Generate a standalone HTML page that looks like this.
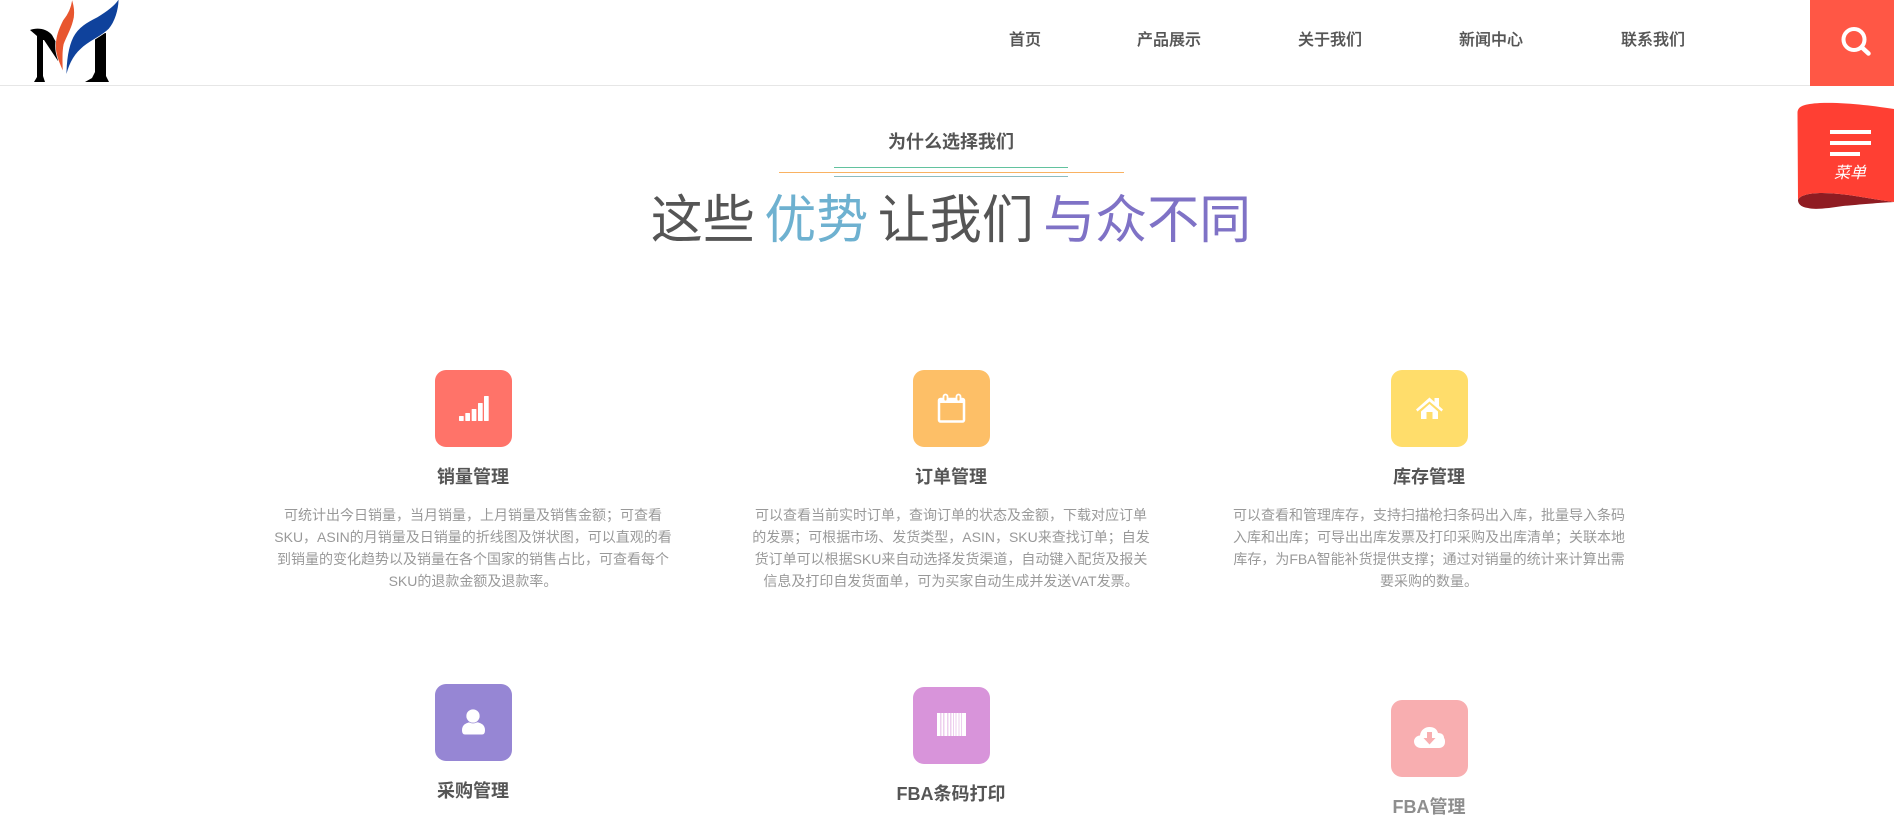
<!DOCTYPE html>
<html lang="zh">
<head>
<meta charset="utf-8">
<title>为什么选择我们</title>
<style>
html,body{margin:0;padding:0;background:#fff}
body{width:1894px;height:822px;overflow:hidden;position:relative;font-family:"Liberation Sans","Noto Sans CJK SC",sans-serif;color:#555}
.a{position:absolute;white-space:nowrap}
.hdr{position:absolute;left:0;top:85px;width:1894px;height:1px;background:#e6e6e6}
.nav{position:absolute;top:29px;font-size:16px;line-height:24px;font-weight:500;color:#555;white-space:nowrap;-webkit-text-stroke:.2px #555}
.ico{position:absolute;width:77px;height:77px;border-radius:11px}
.ico svg{position:absolute;left:0;top:0}
.tt{position:absolute;width:400px;text-align:center;font-size:18px;line-height:26px;font-weight:700;color:#555}
.ds{position:absolute;width:420px;text-align:center;font-size:14px;line-height:22px;color:#999;white-space:nowrap}
</style>
</head>
<body>
<svg class="a" style="left:28px;top:0" width="94" height="86" viewBox="28 0 94 86">
<path fill="#000" d="M30 30 C38 27 47 29 52 35 L57 44 L58 61 L44 40 L43 40 V76 L45 82 H34 L37 77 V36 Z"/>
<path fill="#000" d="M95 35 L106 33 V76 L109 82 H85 L92 78 L95 72 Z"/>
<path fill="#e8562f" stroke="#fff" stroke-width=".6" d="M72 -1 C75 8 75 16 73 22 C71 30 67 36 64 44 C62 52 63 62 63 72 C60 64 55.500 56 55.500 46 C55.500 36 59 28 63 20 C68 14 71 8 72 -1 Z"/>
<path fill="#0f429c" stroke="#fff" stroke-width=".8" d="M119 -2 C116 4 107 11 97 17 C87 22 78 27 73 37 C68 47 66 62 66 78 C68 67 73 56 81 49 C89 41 101 37 109 29 C115 22 119 10 119 -2 Z"/>
</svg>
<div class="hdr"></div>
<div class="nav" style="left:1009px">首页</div>
<div class="nav" style="left:1137px">产品展示</div>
<div class="nav" style="left:1298px">关于我们</div>
<div class="nav" style="left:1459px">新闻中心</div>
<div class="nav" style="left:1621px">联系我们</div>
<div class="a" style="left:1810px;top:0;width:84px;height:86px;background:#ff5745">
<svg width="84" height="86" viewBox="0 0 84 86"><circle cx="44" cy="39.500" r="10.500" fill="none" stroke="#fff" stroke-width="4"/><path d="M52 47.500 L58.500 53.500" stroke="#fff" stroke-width="4.500" stroke-linecap="round"/></svg>
</div>
<svg class="a" style="left:1790px;top:95px" width="104" height="125" viewBox="0 0 104 125">
<path fill="#8f1c22" d="M8 105 C10 100 20 98 32 98 C55 98 80 104 104 107 C85 108 65 110 53 111 C40 113 25 115 18 113 C10 112 8 108 8 105 Z"/>
<path fill="#ff3f33" d="M7.500 18 C7.500 11 14 9 30 8 C55 7 85 11 104 14 V107 C80 104 55 98 32 98 C20 98 10 100 8 105 Z"/>
<rect x="40" y="35" width="41" height="4" fill="#fff"/>
<rect x="40" y="46" width="41" height="4" fill="#fff"/>
<rect x="40" y="57" width="30" height="4" fill="#fff"/>
<text x="60" y="83" font-size="16" font-style="italic" fill="#fff" text-anchor="middle" font-family="Liberation Sans, Noto Sans CJK SC, sans-serif">菜单</text>
</svg>
<div class="a" style="left:751px;width:400px;top:129px;text-align:center;font-size:18px;line-height:26px;font-weight:700;color:#555">为什么选择我们</div>
<div class="a" style="left:834px;top:167px;width:234px;height:1px;background:#62c29e"></div>
<div class="a" style="left:779px;top:172px;width:345px;height:1px;background:#f9b262"></div>
<div class="a" style="left:834px;top:176px;width:234px;height:1px;background:#8cbcc0"></div>
<div class="a" style="left:451px;width:1000px;top:183px;text-align:center;font-size:52px;line-height:76px;font-weight:400;word-spacing:-5px;color:#555">这些 <span style="color:#6eb1d0">优势</span> 让我们 <span style="color:#7f72c6">与众不同</span></div>

<div class="ico" style="left:435px;top:370px;background:#ff7369">
<svg width="77" height="77" viewBox="0 0 77 77" fill="#fff"><rect x="24" y="46" width="4.700" height="5" rx=".6"/><rect x="30.300" y="43" width="4.700" height="8" rx=".6"/><rect x="36.700" y="39" width="4.700" height="12" rx=".6"/><rect x="43" y="33" width="4.700" height="18" rx=".6"/><rect x="49" y="26" width="4.700" height="25" rx=".6"/></svg></div>
<div class="tt" style="left:273px;top:464px">销量管理</div>
<div class="ds" style="left:263px;top:504px">可统计出今日销量，当月销量，上月销量及销售金额；可查看<br>SKU，ASIN的月销量及日销量的折线图及饼状图，可以直观的看<br>到销量的变化趋势以及销量在各个国家的销售占比，可查看每个<br>SKU的退款金额及退款率。</div>

<div class="ico" style="left:913px;top:370px;background:#fdbf67">
<svg width="77" height="77" viewBox="0 0 77 77" fill="none" stroke="#fff"><rect x="26" y="29" width="25" height="22.500" rx="1.500" stroke-width="2.500"/><rect x="26" y="28.500" width="25" height="4.500" rx="1" fill="#fff" stroke="none"/><rect x="30.500" y="24.500" width="4" height="7" rx="2" fill="#fdbf67" stroke-width="1.800"/><rect x="43.500" y="24.500" width="4" height="7" rx="2" fill="#fdbf67" stroke-width="1.800"/></svg></div>
<div class="tt" style="left:751px;top:464px">订单管理</div>
<div class="ds" style="left:741px;top:504px">可以查看当前实时订单，查询订单的状态及金额，下载对应订单<br>的发票；可根据市场、发货类型，ASIN，SKU来查找订单；自发<br>货订单可以根据SKU来自动选择发货渠道，自动键入配货及报关<br>信息及打印自发货面单，可为买家自动生成并发送VAT发票。</div>

<div class="ico" style="left:1391px;top:370px;background:#ffdd6b">
<svg width="77" height="77" viewBox="0 0 77 77" fill="#fff"><path d="M25 39.500 L38.500 27.500 L43.500 32 V28 H48 V36 L52 39.500 L50.500 41.500 L38.500 31.500 L26.500 41.500 Z"/><path d="M30 41.500 L38.500 34 L47 41.500 V49 H41.500 V42 H35.500 V49 H30 Z"/></svg></div>
<div class="tt" style="left:1229px;top:464px">库存管理</div>
<div class="ds" style="left:1219px;top:504px">可以查看和管理库存，支持扫描枪扫条码出入库，批量导入条码<br>入库和出库；可导出出库发票及打印采购及出库清单；关联本地<br>库存，为FBA智能补货提供支撑；通过对销量的统计来计算出需<br>要采购的数量。</div>

<div class="ico" style="left:435px;top:684px;background:#9686d4">
<svg width="77" height="77" viewBox="0 0 77 77" fill="#fff"><path d="M27 46 C27 41 31 38 38.500 38 C46 38 50 41 50 46 C50 49 49 50.500 47 50.500 H30 C28 50.500 27 49 27 46 Z"/><circle cx="38" cy="32" r="7" stroke="#9686d4" stroke-width=".7"/></svg></div>
<div class="tt" style="left:273px;top:778px">采购管理</div>

<div class="ico" style="left:913px;top:687px;background:#d894da">
<svg width="77" height="77" viewBox="0 0 77 77" fill="#fff"><rect x="24" y="26" width="29" height="23" opacity=".55"/><rect x="24" y="26" width="3" height="23"/><rect x="28.500" y="26" width="1.500" height="23"/><rect x="31.500" y="26" width="2.500" height="23"/><rect x="35.500" y="26" width="1.500" height="23"/><rect x="38.500" y="26" width="1.500" height="23"/><rect x="41" y="26" width="1.500" height="23"/><rect x="43.500" y="26" width="2" height="23"/><rect x="46.500" y="26" width="1.500" height="23"/><rect x="49" y="26" width="4" height="23"/></svg></div>
<div class="tt" style="left:751px;top:781px">FBA条码打印</div>

<div class="ico" style="left:1391px;top:700px;background:#f8aeb0">
<svg width="77" height="77" viewBox="0 0 77 77"><path fill="#fff" d="M30 48 C26 48 23 45 23 41.500 C23 38 26 35.500 29 35.500 C29.500 30 34 27 38.500 27 C43 27 46 29 47 33 C51 33 53 35 53 38 C54 39 54 41 54 42 C54 46 51 48 48 48 Z"/><path fill="#f8aeb0" d="M36 32 H41 V38 H44.500 L38.500 44.500 L32.500 38 H36 Z"/></svg></div>
<div class="tt" style="left:1229px;top:794px;color:#8e8e8e">FBA管理</div>
</body>
</html>
